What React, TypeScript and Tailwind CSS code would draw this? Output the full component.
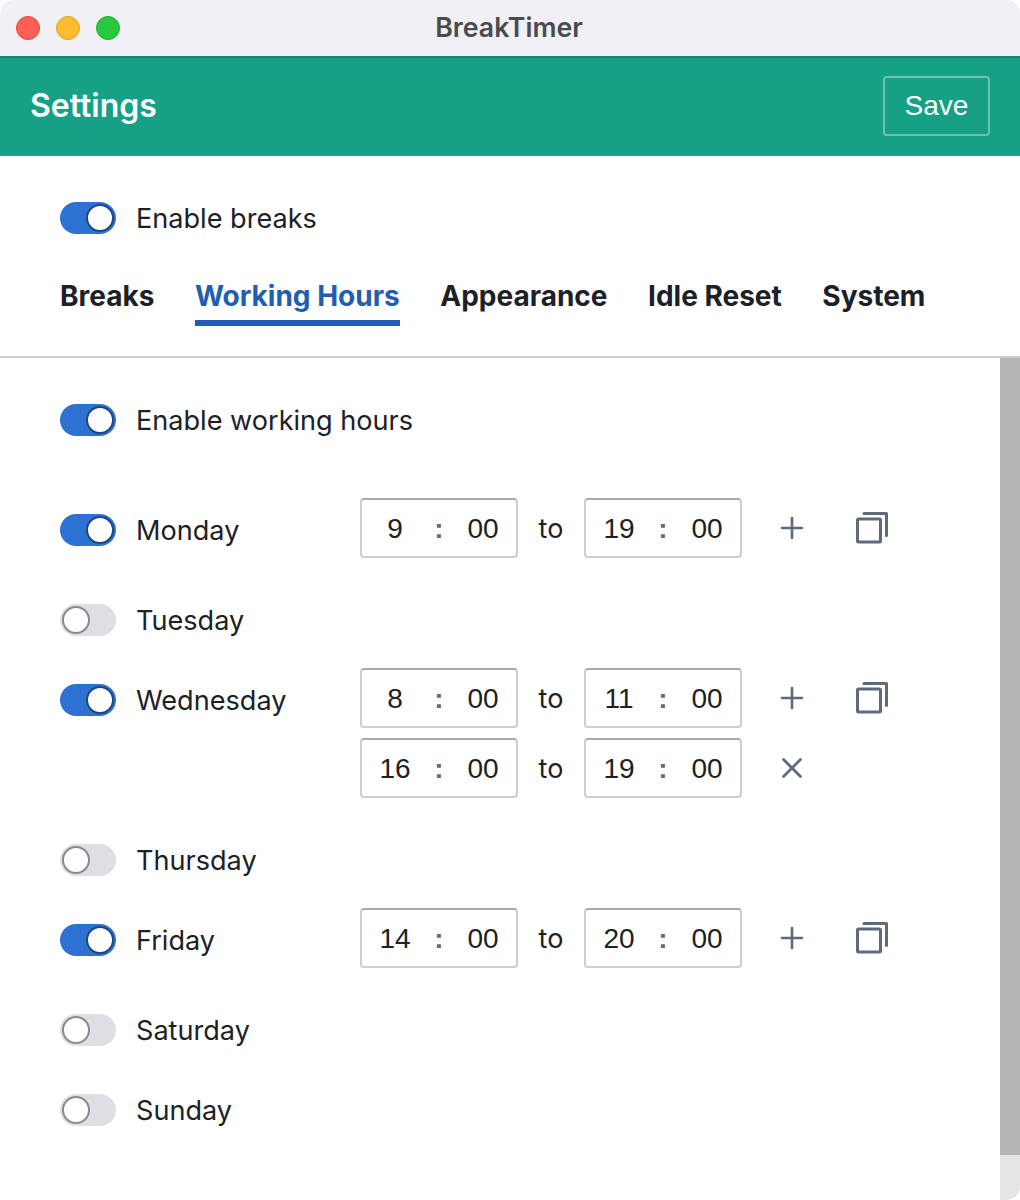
import React from "react";

interface Slot {
  from: string;
  to: string;
}

interface Day {
  name: string;
  slots: Slot[];
}

const days: Day[] = [
  { name: "Monday", slots: [{ from: "9", to: "19" }] },
  { name: "Tuesday", slots: [] },
  {
    name: "Wednesday",
    slots: [
      { from: "8", to: "11" },
      { from: "16", to: "19" },
    ],
  },
  { name: "Thursday", slots: [] },
  { name: "Friday", slots: [{ from: "14", to: "20" }] },
  { name: "Saturday", slots: [] },
  { name: "Sunday", slots: [] },
];

const tabs = ["Breaks", "Working Hours", "Appearance", "Idle Reset", "System"];

const Toggle = ({ on }: { on: boolean }) => (
  <span
    className={`flex h-8 w-14 shrink-0 items-center rounded-full px-[2px] ${
      on ? "justify-end bg-[#2d72d2]" : "justify-start bg-[#dedfe3]"
    }`}
  >
    <span
      className={`h-7 w-7 rounded-full border-2 bg-white ${
        on ? "border-[#1f4681]" : "border-[#8a8a8a]"
      }`}
    />
  </span>
);

const Label = ({ text }: { text: string }) => (
  <span className="ml-5 mt-[2px] text-[27.1px] leading-[30px] text-[#1c2127]">{text}</span>
);

const TimeInput = ({ hour }: { hour: string }) => (
  <div className="grid h-[60px] w-[158px] grid-cols-[66px_22px_66px] items-center rounded border-2 border-[#cdcdcd] border-t-[#a9a9a9] pt-[2px] text-center font-['Liberation_Sans',sans-serif] text-[28px] text-[#1c2127]">
    <span>{hour}</span>
    <span className="font-bold text-[#5f6b7c]">:</span>
    <span>00</span>
  </div>
);

const PlusIcon = () => (
  <svg width="32" height="32" viewBox="0 0 32 32" fill="none" stroke="#5f6b7c" strokeWidth="2.6" strokeLinecap="round">
    <path d="M16 6v20M6 16h20" />
  </svg>
);

const CloseIcon = () => (
  <svg width="32" height="32" viewBox="0 0 32 32" fill="none" stroke="#5f6b7c" strokeWidth="2.8" strokeLinecap="round">
    <path d="M7.5 7.5l17 17M24.5 7.5l-17 17" />
  </svg>
);

const CopyIcon = () => (
  <svg width="32" height="32" viewBox="0 0 32 32" fill="none" stroke="#5f6b7c" strokeWidth="3" strokeLinecap="round" strokeLinejoin="round">
    <rect x="1.5" y="7" width="23" height="23" rx="1" />
    <path d="M8 1.5h22.5v22" />
  </svg>
);

const Row = ({ day }: { day: Day }) => {
  if (day.slots.length === 0) {
    return (
      <div className="flex h-20 items-start pt-4">
        <Toggle on={false} />
        <Label text={day.name} />
      </div>
    );
  }

  return (
    <div className="flex items-start pb-5">
      <div className="flex w-[300px] items-center pt-4">
        <Toggle on />
        <Label text={day.name} />
      </div>
      <div>
        {day.slots.map((slot, i) => (
          <div key={i} className="mb-[10px] flex items-center">
            <TimeInput hour={slot.from} />
            <span className="mt-[2px] w-[66px] text-center text-[27px] leading-8 text-[#1c2127]">to</span>
            <TimeInput hour={slot.to} />
            <span className="ml-[34px]">{i === 0 ? <PlusIcon /> : <CloseIcon />}</span>
            {i === 0 && (
              <span className="ml-[48px]">
                <CopyIcon />
              </span>
            )}
          </div>
        ))}
      </div>
    </div>
  );
};

export default function App() {
  return (
    <div className="flex h-[1200px] w-[1020px] flex-col overflow-hidden rounded-t-[14px] bg-white font-['Inter',sans-serif]">
      {/* title bar */}
      <div className="relative flex h-14 shrink-0 items-center justify-center bg-[#f1f0f5]">
        <div className="absolute left-4 top-4 flex gap-4">
          <span className="h-6 w-6 rounded-full border border-[#e2463f] bg-[#ff5f57]" />
          <span className="h-6 w-6 rounded-full border border-[#dfa023] bg-[#febc2e]" />
          <span className="h-6 w-6 rounded-full border border-[#1dad2b] bg-[#28c840]" />
        </div>
        <span className="-mt-[2px] -ml-[2px] text-[26.7px] font-semibold text-[#4b4b4d]">BreakTimer</span>
      </div>

      {/* header */}
      <div className="flex h-[100px] shrink-0 items-center justify-between border-t-2 border-[#0f8a70] bg-[#16a085] px-[30px]">
        <span className="-mt-[2px] text-[32px] font-semibold text-white">Settings</span>
        <button className="-mt-[2px] h-[60px] w-[107px] rounded border-2 border-[#6fc2b1] font-['Liberation_Sans',sans-serif] text-[28px] text-white">
          Save
        </button>
      </div>

      {/* top section */}
      <div className="h-[202px] shrink-0 border-b-2 border-[#cfcfcf] pl-[60px] pt-[46px]">
        <div className="flex items-center">
          <Toggle on />
          <Label text="Enable breaks" />
        </div>
        <div className="mt-8 flex gap-[40.5px] text-[28px] font-bold text-[#1c2127]">
          {tabs.map((tab) => (
            <div
              key={tab}
              className={`flex h-[60px] items-center border-b-[6px] pt-[6px] ${
                tab === "Working Hours" ? "border-[#215db0] text-[#215db0]" : "border-transparent"
              }`}
            >
              {tab}
            </div>
          ))}
        </div>
      </div>

      {/* scroll area */}
      <div className="flex min-h-0 flex-1">
        <div className="flex-1 pl-[60px] pt-[46px]">
          <div className="mb-[62px] flex items-center">
            <Toggle on />
            <Label text="Enable working hours" />
          </div>
          {days.map((day) => (
            <Row key={day.name} day={day} />
          ))}
        </div>
        <div className="flex w-5 shrink-0 flex-col overflow-hidden rounded-br-[14px] bg-[#e5e5e5]">
          <div className="h-[797px] bg-[#b5b5b5]" />
        </div>
      </div>
    </div>
  );
}
